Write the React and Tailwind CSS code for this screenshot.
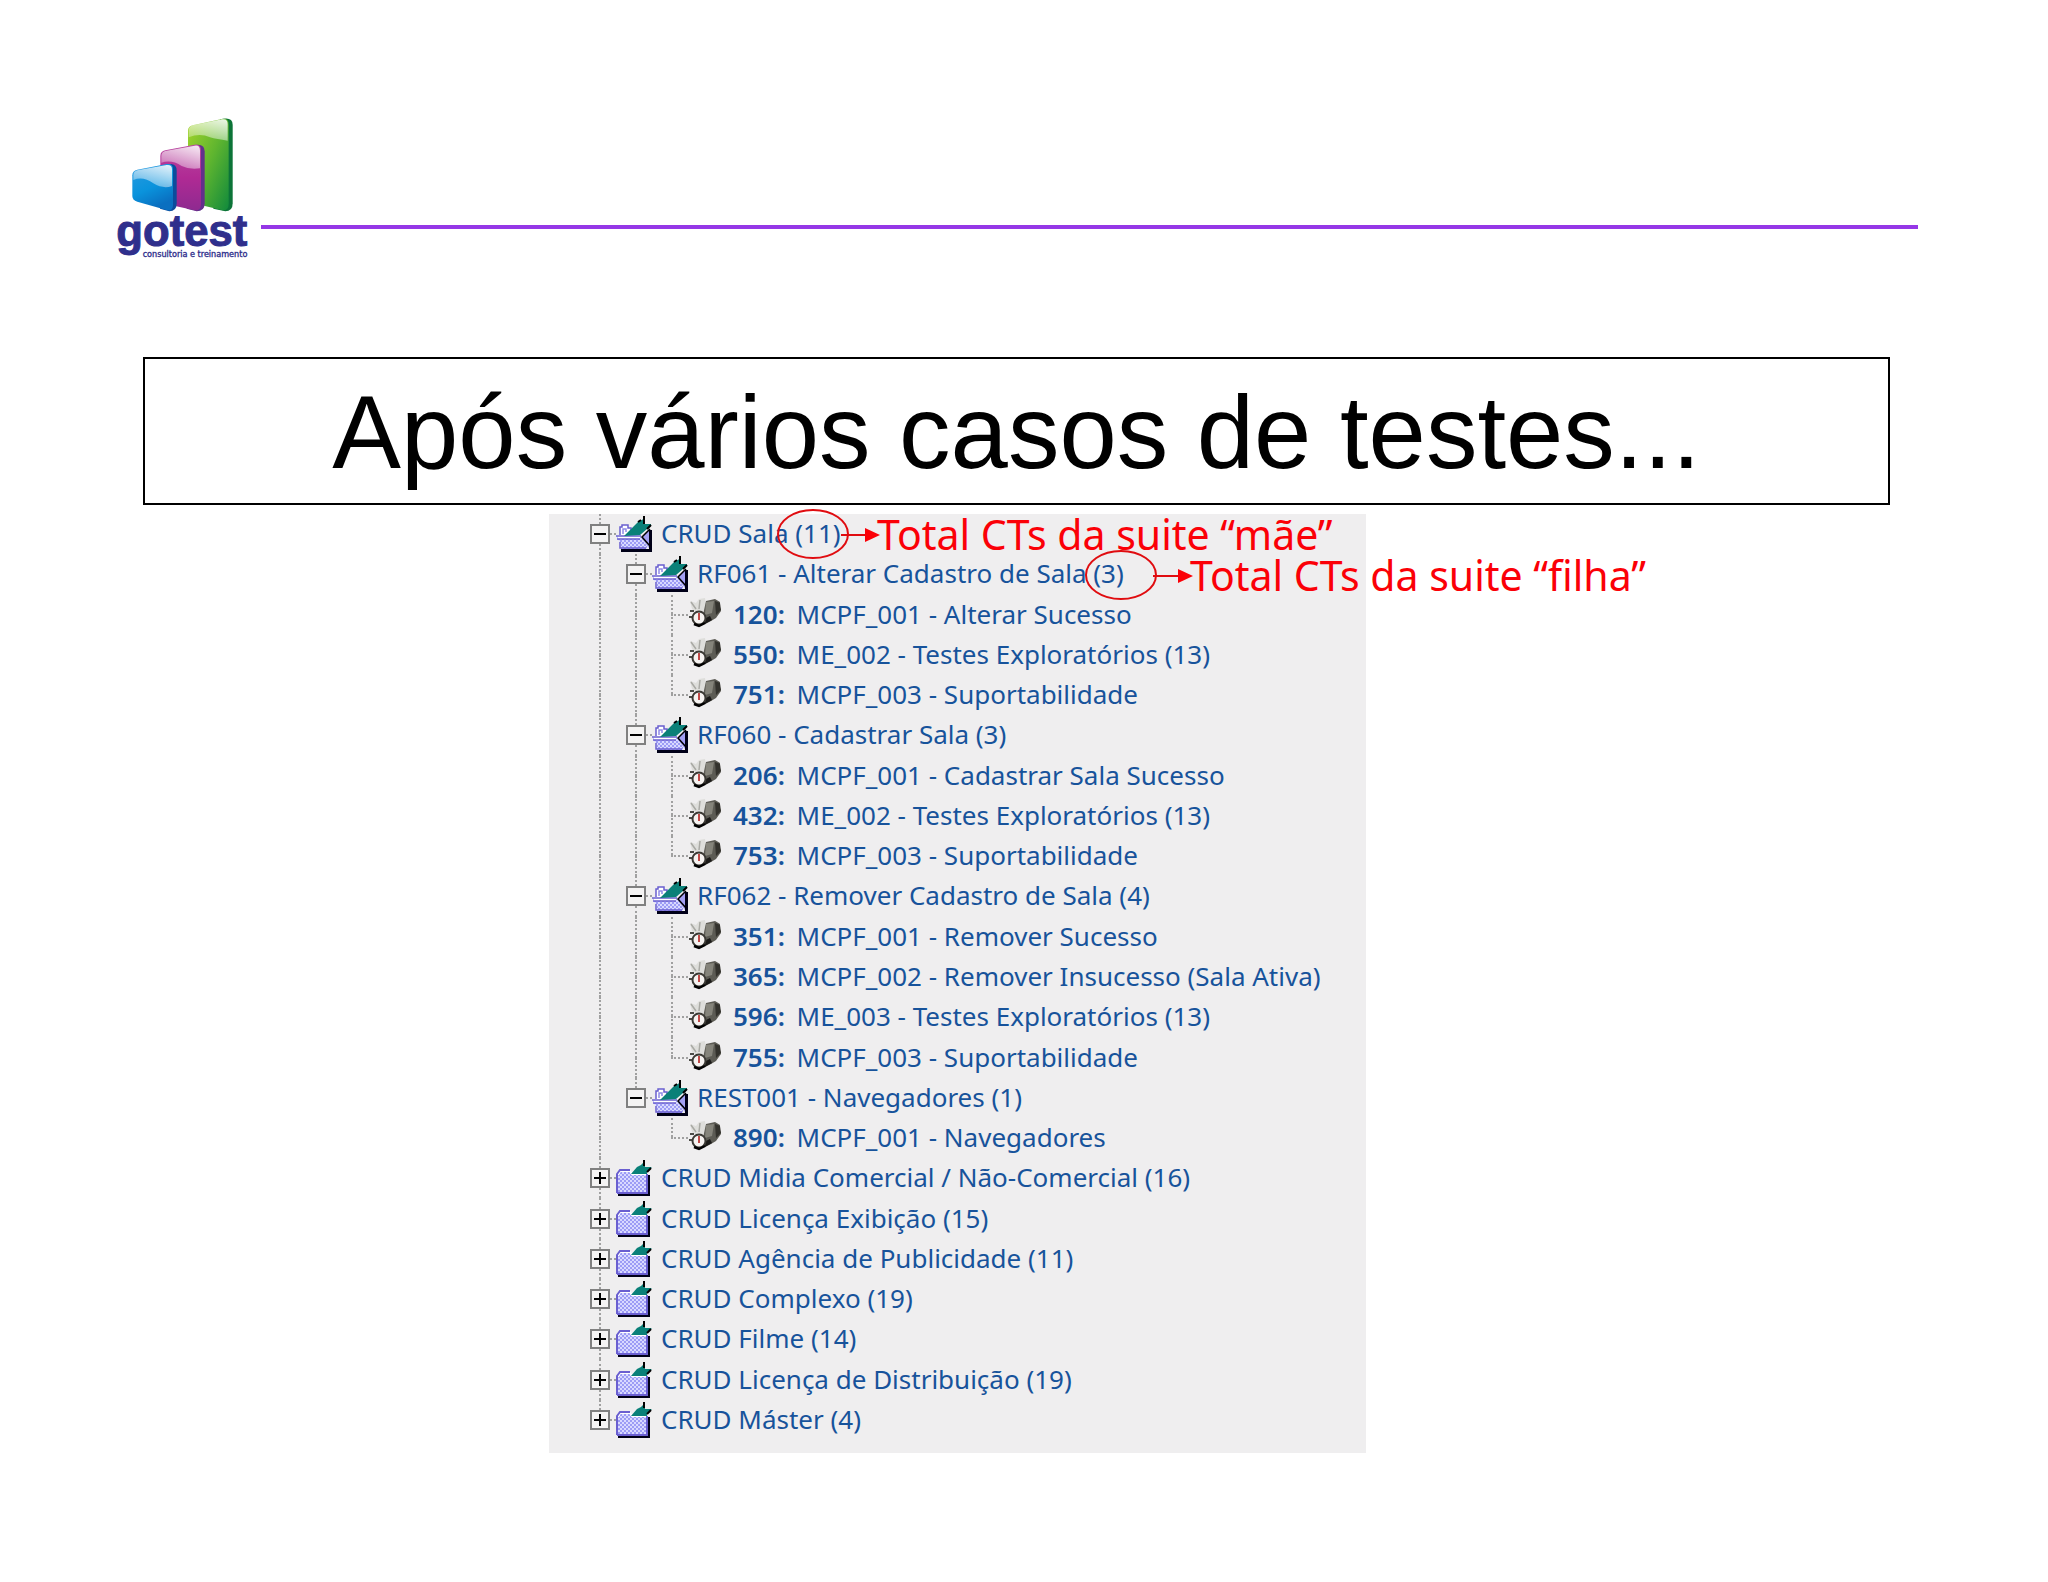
import React from "react";

const rows = [
  { level: 0, open: true, text: "CRUD Sala (11)" },
  { level: 1, open: true, text: "RF061 - Alterar Cadastro de Sala (3)" },
  { id: "120", text: "MCPF_001 - Alterar Sucesso" },
  { id: "550", text: "ME_002 - Testes Exploratórios (13)" },
  { id: "751", text: "MCPF_003 - Suportabilidade", last: true },
  { level: 1, open: true, text: "RF060 - Cadastrar Sala (3)" },
  { id: "206", text: "MCPF_001 - Cadastrar Sala Sucesso" },
  { id: "432", text: "ME_002 - Testes Exploratórios (13)" },
  { id: "753", text: "MCPF_003 - Suportabilidade", last: true },
  { level: 1, open: true, text: "RF062 - Remover Cadastro de Sala (4)" },
  { id: "351", text: "MCPF_001 - Remover Sucesso" },
  { id: "365", text: "MCPF_002 - Remover Insucesso (Sala Ativa)" },
  { id: "596", text: "ME_003 - Testes Exploratórios (13)" },
  { id: "755", text: "MCPF_003 - Suportabilidade", last: true },
  { level: 1, open: true, text: "REST001 - Navegadores (1)", last: true },
  { id: "890", text: "MCPF_001 - Navegadores", last: true, noParentLine: true },
  { level: 0, text: "CRUD Midia Comercial / Não-Comercial (16)" },
  { level: 0, text: "CRUD Licença Exibição (15)" },
  { level: 0, text: "CRUD Agência de Publicidade (11)" },
  { level: 0, text: "CRUD Complexo (19)" },
  { level: 0, text: "CRUD Filme (14)" },
  { level: 0, text: "CRUD Licença de Distribuição (19)" },
  { level: 0, text: "CRUD Máster (4)", last: true },
];

function Logo() {
  return (
    <svg className="w-[131px] h-[140px] shrink-0 overflow-visible" viewBox="51 54 393 420" role="img" aria-label="gotest consultoria e treinamento">
      <defs>
        <linearGradient id="green" x1="0" y1="0" x2="1" y2="1">
          <stop offset="0" stopColor="#a5d52a" /><stop offset="0.5" stopColor="#5fb52f" /><stop offset="1" stopColor="#118a3c" />
        </linearGradient>
        <linearGradient id="magenta" x1="0" y1="0" x2="0" y2="1">
          <stop offset="0" stopColor="#b8479f" /><stop offset="0.5" stopColor="#b02a94" /><stop offset="1" stopColor="#8e2a90" />
        </linearGradient>
        <linearGradient id="blue" x1="0" y1="0" x2="0.4" y2="1">
          <stop offset="0" stopColor="#2b9be0" /><stop offset="0.6" stopColor="#0a93dc" /><stop offset="1" stopColor="#0a6fc0" />
        </linearGradient>
        <linearGradient id="gloss" x1="0.8" y1="0" x2="0.3" y2="1">
          <stop offset="0" stopColor="#fff" stopOpacity="0.85" /><stop offset="1" stopColor="#fff" stopOpacity="0.3" />
        </linearGradient>
      </defs>
      <path d="M360 58Q398 48 398 74V310Q398 334 376 334L340 326Z" fill="#0c7438" />
      <path d="M264 92Q264 80 278 76L366 57Q386 53 386 74V312Q386 332 368 331L280 310Q264 306 264 290Z" fill="url(#green)" />
      <path d="M266 92Q266 80 278 76L366 58Q383 55 383 72V122Q350 118 330 112Q300 98 266 112Z" fill="url(#gloss)" />
      <path d="M280 136Q314 128 314 154V310Q314 334 290 334L260 326Z" fill="#63308c" />
      <path d="M181 168Q181 154 196 151L284 134Q303 131 303 152V312Q303 333 284 331L198 312Q181 308 181 292Z" fill="url(#magenta)" />
      <path d="M184 168Q184 156 196 153L284 137Q300 134 300 152V205Q270 210 245 198Q215 178 184 188Z" fill="url(#gloss)" />
      <path d="M200 194Q230 186 230 212V310Q230 334 208 334L180 326Z" fill="#0b4c9c" />
      <path d="M97 226Q97 212 112 209L200 192Q219 190 219 208V314Q219 334 202 331L112 305Q97 300 97 288Z" fill="url(#blue)" />
      <path d="M100 226Q100 214 112 211L200 195Q216 193 216 208V258Q190 268 160 250Q130 228 100 240Z" fill="url(#gloss)" />
      <text x="49" y="439" fontSize="131" fontWeight="700" fill="#2f2f8c" stroke="#2f2f8c" strokeWidth="3" fontFamily="'Liberation Sans', Arial, sans-serif">gotest</text>
      <text x="128" y="471" fontSize="27" fill="#2f2f8c" stroke="#2f2f8c" strokeWidth="1" fontFamily="'Liberation Sans Narrow', 'DejaVu Sans Condensed', sans-serif">consultoria e treinamento</text>
    </svg>
  );
}

function Weave() {
  return (
    <svg className="absolute w-0 h-0" aria-hidden="true">
      <defs>
        <pattern id="weave" width="4" height="4" patternUnits="userSpaceOnUse">
          <rect width="4" height="4" fill="#d9d9ff" />
          <rect width="2" height="2" fill="#9c9cf5" />
          <rect x="2" y="2" width="2" height="2" fill="#9c9cf5" />
        </pattern>
      </defs>
    </svg>
  );
}

function OpenFolder() {
  return (
    <svg className="w-9 h-9 shrink-0" viewBox="0 0 36 36" aria-hidden="true">
      <path d="M4 20V11H6V9H12V12H15V20Z" fill="#fff" stroke="#6a5fd0" strokeWidth="1.5" />
      <path d="M7 18V13H10V16" fill="none" stroke="#8f8ae6" strokeWidth="1.5" />
      <path d="M5 33H33V14H36V36H5Z" fill="#000018" />
      <path d="M25 22L33 13V32Z" fill="#a3a0f4" />
      <path d="M1 20H24L31 30V33H5V27L1 23Z" fill="url(#weave)" />
      <path d="M1 19H24V23H2Z" fill="#fff" />
      <path d="M0 20H25M1 23H24M4 26V32H30" fill="none" stroke="#6a5fd0" strokeWidth="1.5" />
      <path d="M34 13L26 21L34 30" fill="none" stroke="#000" strokeWidth="1.5" />
      <path d="M8 20L22 6L26 4L29 1V8H35V10L31 13L24 19Z" fill="#0a8078" />
      <path d="M28 0V8M35 9L31 13M22 6L25 4" fill="none" stroke="#000" strokeWidth="2" />
    </svg>
  );
}

function ClosedFolder() {
  return (
    <svg className="w-9 h-9 shrink-0" viewBox="0 0 36 36" aria-hidden="true">
      <path d="M2 34H31V15H34V36H2Z" fill="#000018" />
      <path d="M1 14L4 10H14L16 13H31V33H1Z" fill="url(#weave)" />
      <path d="M2 15L4 11H14L16 14H30" fill="none" stroke="#fff" strokeWidth="2" />
      <path d="M1 33V14L4 10H14M1 33H31V14" fill="none" stroke="#6a5fd0" strokeWidth="2" />
      <path d="M15 14L21 7L25 5L29 1V7H36L31 11L31 14Z" fill="#0a8078" />
      <path d="M28 0V6M35 8L31 12" fill="none" stroke="#000" strokeWidth="2" />
    </svg>
  );
}

function CaseIcon() {
  return (
    <svg className="w-9 h-9 shrink-0" viewBox="0 0 36 36" aria-hidden="true">
      <path d="M2 4L8 6L11 2L17 1L19 14L10 16L4 12Z" fill="#dededb" />
      <path d="M3 5L8 12M12 3L11 12" stroke="#a9a9a4" strokeWidth="1.5" />
      <path d="M18 4L27 2L32 5V10L33 14L28 21L23 24L17 27L15 18Z" fill="#5c5b54" />
      <path d="M18 5L26 4L24 16L17 18Z" fill="#85847b" />
      <path d="M27 4L32 6L33 13L28 18Z" fill="#33322d" />
      <path d="M16 22L22 19L24 23L17 27Z" fill="#1b1a18" />
      <path d="M2 14H6M1 20H4" stroke="#4b4b47" strokeWidth="2" />
      <circle cx="11" cy="21" r="6.5" fill="#f6f3f1" stroke="#3b3934" strokeWidth="2" />
      <path d="M6 27L11 29L17 26" fill="none" stroke="#000" strokeWidth="2.5" />
      <path d="M11 16V23" stroke="#c04a48" strokeWidth="2" />
    </svg>
  );
}

function Guide({ half, stub, blank }) {
  return (
    <span className="w-9 shrink-0 self-stretch flex flex-col pl-[19px]" aria-hidden="true">
      {!blank && <span className="flex-1 border-l-2 border-dotted border-[#a0a0a0]" />}
      {!blank && (stub
        ? <span className={half ? "flex-1 border-t-2 border-dotted border-[#a0a0a0]" : "flex-1 border-l-2 border-t-2 border-dotted border-[#a0a0a0]"} />
        : <span className="flex-1 border-l-2 border-dotted border-[#a0a0a0]" />)}
    </span>
  );
}

function Toggle({ open, half, label }) {
  return (
    <span className="w-9 shrink-0 self-stretch flex flex-col">
      <span className="flex-1 ml-[19px] border-l-2 border-dotted border-[#a0a0a0]" />
      <span className="flex items-center pl-[10px]">
        <button type="button" aria-label={label} aria-expanded={!!open} className="w-5 h-5 shrink-0 border-2 border-[#808080] bg-[#f4f3f3] flex items-center justify-center">
          <svg className="w-3 h-3" viewBox="0 0 12 12" aria-hidden="true">
            <path d={open ? "M0 6H12" : "M0 6H12M6 0V12"} stroke="#000" strokeWidth="2" />
          </svg>
        </button>
        <span className="flex-1 border-t-2 border-dotted border-[#a0a0a0]" />
      </span>
      <span className={half ? "flex-1" : "flex-1 ml-[19px] border-l-2 border-dotted border-[#a0a0a0]"} />
    </span>
  );
}

function Row({ row }) {
  const leaf = !!row.id;
  return (
    <li className="flex items-center">
      {(leaf || row.level === 1) && <Guide />}
      {leaf && <Guide blank={row.noParentLine} />}
      {leaf ? <Guide stub half={row.last} /> : <Toggle open={row.open} half={row.last} label={row.text} />}
      {leaf ? <CaseIcon /> : row.open ? <OpenFolder /> : <ClosedFolder />}
      <a href="#" className="ml-[9px] pb-0.5 whitespace-nowrap">
        {leaf && <b className="font-semibold mr-[5px]">{row.id}:</b>}
        {leaf ? " " + row.text : row.text}
      </a>
    </li>
  );
}

function Callout({ children, className, from, tip }) {
  return (
    <p className={"absolute flex items-center text-[#fb0007] text-[41px] leading-[48px] whitespace-nowrap " + className}>
      <svg className="h-[52px] shrink-0 overflow-visible" width={tip - 3} height="52" aria-hidden="true">
        <ellipse cx="36" cy="26" rx="35" ry="24" fill="none" stroke="#e00c10" strokeWidth="2" />
        <path d={`M${from} 27H${tip - 14}`} stroke="#e00c10" strokeWidth="2" />
        <path d={`M${tip - 15} 20L${tip} 27L${tip - 15} 34Z`} fill="#fb0007" />
      </svg>
      {children}
    </p>
  );
}

export default function App() {
  return (
    <main className="bg-white min-h-screen pb-20 font-['Noto_Sans',sans-serif]">
      <Weave />
      <header className="flex items-start pt-[118px] pl-[117px] pr-[130px]">
        <Logo />
        <div className="flex-1 h-1 ml-[13px] mt-[107px] bg-[#9537e6]" />
      </header>
      <h1 className="mt-[99px] ml-[143px] mr-[158px] border-2 border-black pt-1 text-center text-[103px] leading-[140px] text-black font-['Liberation_Sans',Arial,sans-serif]">
        Após vários casos de testes...
      </h1>
      <section className="relative mt-[9px] ml-[549px] w-[817px] bg-[#efeeef] pl-[31px] pb-[13px]">
        <ul className="grid auto-rows-fr min-h-[926px] text-[26px] leading-[36px] text-[#17539b]">
          {rows.map((row, i) => <Row key={i} row={row} />)}
        </ul>
        <Callout className="left-[228px] top-[-6px]" from={64} tip={103}>Total CTs da suite “mãe”</Callout>
        <Callout className="left-[536px] top-[35px]" from={68} tip={108}>Total CTs da suite “filha”</Callout>
      </section>
    </main>
  );
}
